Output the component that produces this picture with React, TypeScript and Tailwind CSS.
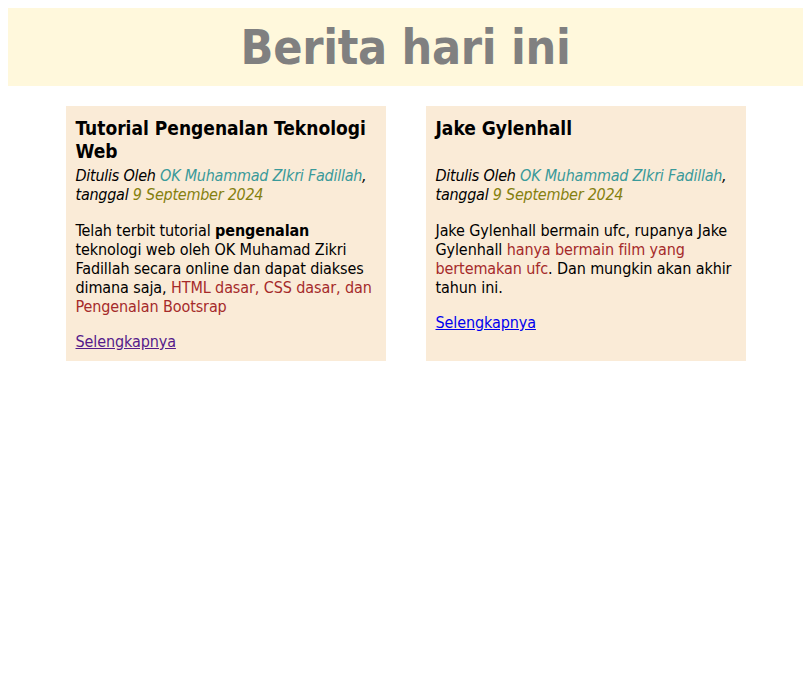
export default function App() {
  const font = { fontFamily: '"DejaVu Sans Condensed", "DejaVu Sans", sans-serif' };
  return (
    <div className="m-2 text-black" style={font}>
      <div className="bg-[#fff8dc] h-[78px] flex items-center justify-center">
        <h1 className="text-[#808080] font-bold text-[48px] leading-none tracking-[-0.3px]" style={font}>Berita hari ini</h1>
      </div>
      <div className="flex justify-center gap-10 mt-5">
        <div className="w-[320px] bg-[#faebd7] px-[10px] pt-[11px] pb-[10px] text-[16px] leading-[19px] tracking-[-0.1px]">
          <h3 className="font-bold text-[19px] leading-[23px] h-[49px] tracking-normal">Tutorial Pengenalan Teknologi Web</h3>
          <p className="italic tracking-[-0.25px]">
            Ditulis Oleh <span className="text-[#3a9a9a]">OK Muhammad ZIkri Fadillah</span>,<br />tanggal{' '}
            <span className="text-[#85800f]">9 September 2024</span>
          </p>
          <p className="mt-[17px]">
            Telah terbit tutorial <b>pengenalan</b>
            <br />
            teknologi web oleh OK Muhamad Zikri
            <br />
            Fadillah secara online dan dapat diakses
            <br />
            dimana saja, <span className="text-[#a52a2a]">HTML dasar, CSS dasar, dan<br />Pengenalan Bootsrap</span>
          </p>
          <p className="mt-4">
            <a href="#" className="underline text-[#551a8b]">Selengkapnya</a>
          </p>
        </div>
        <div className="w-[320px] bg-[#faebd7] px-[10px] pt-[11px] pb-[10px] text-[16px] leading-[19px] tracking-[-0.1px]">
          <h3 className="font-bold text-[19px] leading-[23px] h-[49px] tracking-normal">Jake Gylenhall</h3>
          <p className="italic tracking-[-0.25px]">
            Ditulis Oleh <span className="text-[#3a9a9a]">OK Muhammad ZIkri Fadillah</span>,<br />tanggal{' '}
            <span className="text-[#85800f]">9 September 2024</span>
          </p>
          <p className="mt-[17px]">
            Jake Gylenhall bermain ufc, rupanya Jake
            <br />
            Gylenhall <span className="text-[#a52a2a]">hanya bermain film yang<br />bertemakan ufc</span>. Dan mungkin akan akhir
            <br />
            tahun ini.
          </p>
          <p className="mt-4">
            <a href="#" className="underline text-[#0000ee]">Selengkapnya</a>
          </p>
        </div>
      </div>
    </div>
  );
}
